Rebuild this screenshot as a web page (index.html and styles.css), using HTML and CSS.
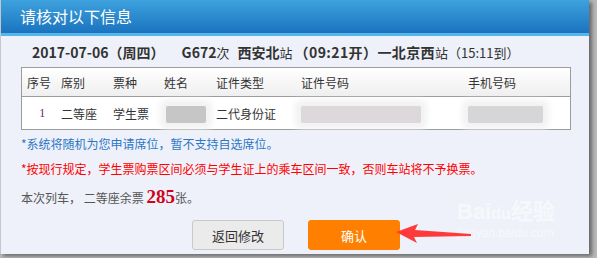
FILE: index.html
```html
<!DOCTYPE html>
<html lang="zh-CN">
<head>
<meta charset="utf-8">
<title>请核对以下信息</title>
<link rel="stylesheet" href="styles.css">
</head>
<body>
<div class="dialog">
  <div class="titlebar">请核对以下信息</div>
  <div class="content">
    <div class="trip">
      <span class="b">2017-07-06（周四）</span>
      <span class="b train">G672</span><span class="n">次</span>
      <span class="b st">西安北</span><span class="n">站</span><span class="b dep">（09:21开）一北京西</span><span class="n">站（15:11到）</span>
    </div>
    <div class="table">
      <div class="row head">
        <div class="c c1">序号</div>
        <div class="c">席别</div>
        <div class="c">票种</div>
        <div class="c">姓名</div>
        <div class="c">证件类型</div>
        <div class="c">证件号码</div>
        <div class="c">手机号码</div>
      </div>
      <div class="row body">
        <div class="c c1 num">1</div>
        <div class="c">二等座</div>
        <div class="c">学生票</div>
        <div class="c"><span class="blur blur-name"></span></div>
        <div class="c">二代身份证</div>
        <div class="c"><span class="blur blur-id"></span></div>
        <div class="c"><span class="blur blur-phone"></span></div>
      </div>
    </div>
    <p class="note blue">*系统将随机为您申请席位，暂不支持自选席位。</p>
    <p class="note red">*按现行规定，学生票购票区间必须与学生证上的乘车区间一致，否则车站将不予换票。</p>
    <p class="note gray">本次列车， 二等座余票 <span class="count">285</span>张。</p>
    <div class="buttons">
      <button class="btn back">返回修改</button>
      <button class="btn ok">确认</button>
    </div>
  </div>
  <div class="watermark"><span class="wm-big">Bai<span class="wm-du">du</span>经验</span><span class="wm-small">jingyan.baidu.com</span></div>
</div>
<svg class="arrow" width="200" height="30" viewBox="0 0 200 30">
  <polygon points="0,11 22,3 19,9 75,13 75,15 18,16 21,22" fill="#ff3a3a"/>
</svg>
</body>
</html>
```

FILE: styles.css
```css
* { box-sizing: border-box; }
html, body { margin: 0; padding: 0; }
body {
  width: 597px;
  height: 258px;
  overflow: hidden;
  background: #b9b9bb;
  font-family: "Noto Sans CJK SC", "Liberation Sans", sans-serif;
  position: relative;
}
.dialog {
  position: relative;
  width: 589px;
  height: 254px;
  background: #eef1f9;
  border-left: 1px solid #c4c6cc;
  box-shadow: 3px 2px 4px rgba(0,0,0,0.45);
  overflow: hidden;
}
.titlebar {
  height: 36px;
  padding-left: 19px;
  color: #fff;
  font-size: 16px;
  line-height: 33px;
  background: linear-gradient(#3ea2de, #1a73bf);
  border-bottom: 3px solid #56b6ea;
}
.content {
  padding: 0 0 0 20px;
}
.trip {
  height: 31px;
  padding-left: 11px;
  padding-top: 6px;
  font-size: 14px;
  color: #333;
  line-height: 20px;
  white-space: nowrap;
}
.trip .b { font-weight: bold; }
.trip .n { font-size: 13px; }
.trip .train { margin-left: 14px; }
.trip .st { margin-left: 5px; }
.trip .dep { margin-left: 2px; letter-spacing: 0.4px; }
.table {
  width: 550px;
  border: 1px solid #9c9c9c;
  background: #fff;
}
.row {
  display: grid;
  grid-template-columns: 39px 52px 51px 52px 85px 167px 1fr;
  font-size: 12px;
  color: #333;
  align-items: center;
}
.row.head {
  height: 29px;
  background: linear-gradient(#ffffff, #efefef);
  border-bottom: 1px solid #9c9c9c;
}
.row.body {
  height: 32px;
}
.c { white-space: nowrap; }
.c1 { padding-left: 5px; }
.num { padding-left: 17px; color: #7a2d7a; font-family: "Liberation Serif", serif; font-size: 13px; }
.blur {
  display: inline-block;
  height: 17px;
  vertical-align: middle;
  background: #cfcfcf;
  border-radius: 2px;
  box-shadow: 0 0 6px 6px #f2f2f2;
}
.blur-name { width: 40px; background: #c6c6c6; margin-left: 2px; }
.blur-id { width: 120px; background: #dcd8dc; }
.blur-phone { width: 75px; background: #d6d6d8; margin-left: 0; }
.note {
  margin: 0;
  font-size: 12px;
  line-height: 16px;
  white-space: nowrap;
}
.note.blue { color: #2c76c6; margin-top: 6px; }
.note.red { color: #f00; margin-top: 9px; }
.note.gray { color: #555; margin-top: 9px; line-height: 22px; }
.count {
  color: #d0021b;
  font-family: "Liberation Serif", serif;
  font-weight: bold;
  font-size: 19px;
}
.buttons {
  display: flex;
  gap: 24px;
  padding-left: 171px;
  margin-top: 11px;
}
.btn {
  width: 92px;
  height: 30px;
  border-radius: 3px;
  font-family: "Noto Sans CJK SC", sans-serif;
  font-size: 13px;
  padding: 0;
  cursor: pointer;
}
.btn.back {
  background: #ebebeb;
  border: 1px solid #c9c9c9;
  color: #333;
}
.btn.ok {
  background: #ff8000;
  border: 1px solid #ff8000;
  color: #fff;
}
.watermark {
  position: absolute;
  left: 456px;
  top: 200px;
  display: flex;
  flex-direction: column;
  color: rgba(255,255,255,0.55);
  pointer-events: none;
}
.wm-big { font-family: "Liberation Sans", sans-serif; font-size: 22px; font-weight: bold; line-height: 24px; }
.wm-du { font-size: 16px; }
.wm-small { font-family: "Liberation Sans", sans-serif; font-size: 12px; line-height: 14px; }
.arrow {
  position: absolute;
  left: 396px;
  top: 221px;
}
```
